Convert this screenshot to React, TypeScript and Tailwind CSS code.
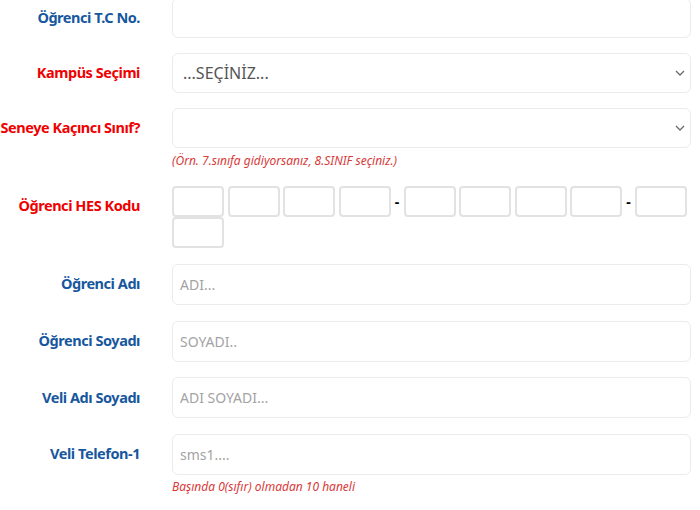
import React from "react";

const blue = "text-[#17579e]";
const red = "text-[#f00000]";

function Label({ text, color }: { text: string; color: string }) {
  return (
    <div className={`w-[140px] shrink-0 h-[40px] flex items-center justify-end text-right whitespace-nowrap font-bold text-[14.5px] tracking-[-0.45px] ${color}`}>
      {text}
    </div>
  );
}

function Chevron() {
  return (
    <svg width="10" height="6" viewBox="0 0 10 6" className="shrink-0">
      <path d="M1 1l4 4 4-4" fill="none" stroke="#6b6b6b" strokeWidth="1.3" />
    </svg>
  );
}

function TextBox({ placeholder }: { placeholder?: string }) {
  return (
    <div className="h-[41px] w-full rounded-[6px] border border-[#ebebeb] bg-white flex items-center px-[7px] text-[14px] text-[#a3a3a3]">
      {placeholder}
    </div>
  );
}

function SelectBox({ value }: { value?: string }) {
  return (
    <div className="h-[40px] w-full rounded-[6px] border border-[#ebebeb] bg-white flex items-center justify-between pl-[10px] pr-[5px] text-[16px] text-[#555]">
      <span>{value}</span>
      <Chevron />
    </div>
  );
}

function HesBox() {
  return <div className="w-[52px] h-[31px] rounded-[4px] border-2 border-[#e2e2e2] bg-white" />;
}

function Dash() {
  return <div className="w-[6px] h-[31px] flex items-center justify-center text-[14px] font-bold text-black">-</div>;
}

function Row({ label, color, children }: { label: string; color: string; children: React.ReactNode }) {
  return (
    <div className="flex gap-[32px]">
      <Label text={label} color={color} />
      <div className="w-[519px]">{children}</div>
    </div>
  );
}

export default function App() {
  return (
    <div className="w-[700px] h-[510px] overflow-hidden bg-white" style={{ fontFamily: '"Noto Sans", "Open Sans", sans-serif' }}>
      <div className="-mt-[2px] flex flex-col gap-[15px]">
        <Row label="Öğrenci T.C No." color={blue}>
          <div className="h-[40px] w-full rounded-[6px] border border-[#ebebeb] bg-white" />
        </Row>
        <Row label="Kampüs Seçimi" color={red}>
          <SelectBox value="...SEÇİNİZ..." />
        </Row>
        <Row label="Seneye Kaçıncı Sınıf?" color={red}>
          <SelectBox />
          <div className="mt-[4px] h-[18px] text-[12px] italic text-[#d83a3a] leading-[18px]">
            (Örn. 7.sınıfa gidiyorsanız, 8.SINIF seçiniz.)
          </div>
        </Row>
        <div className="flex gap-[32px] mt-[1px] mb-[1px]">
          <Label text="Öğrenci HES Kodu" color={red} />
          <div className="w-[519px] flex flex-wrap gap-x-[3.5px]">
            <HesBox />
            <HesBox />
            <HesBox />
            <HesBox />
            <Dash />
            <HesBox />
            <HesBox />
            <HesBox />
            <HesBox />
            <Dash />
            <HesBox />
            <HesBox />
          </div>
        </div>
        <div className="flex flex-col gap-[15.7px]">
          <Row label="Öğrenci Adı" color={blue}>
            <TextBox placeholder="ADI..." />
          </Row>
          <Row label="Öğrenci Soyadı" color={blue}>
            <TextBox placeholder="SOYADI.." />
          </Row>
          <Row label="Veli Adı Soyadı" color={blue}>
            <TextBox placeholder="ADI SOYADI..." />
          </Row>
          <Row label="Veli Telefon-1" color={blue}>
            <TextBox placeholder="sms1...." />
            <div className="mt-[3px] text-[12px] italic text-[#d83a3a] leading-[18px]">
              Başında 0(sıfır) olmadan 10 haneli
            </div>
          </Row>
        </div>
      </div>
    </div>
  );
}
